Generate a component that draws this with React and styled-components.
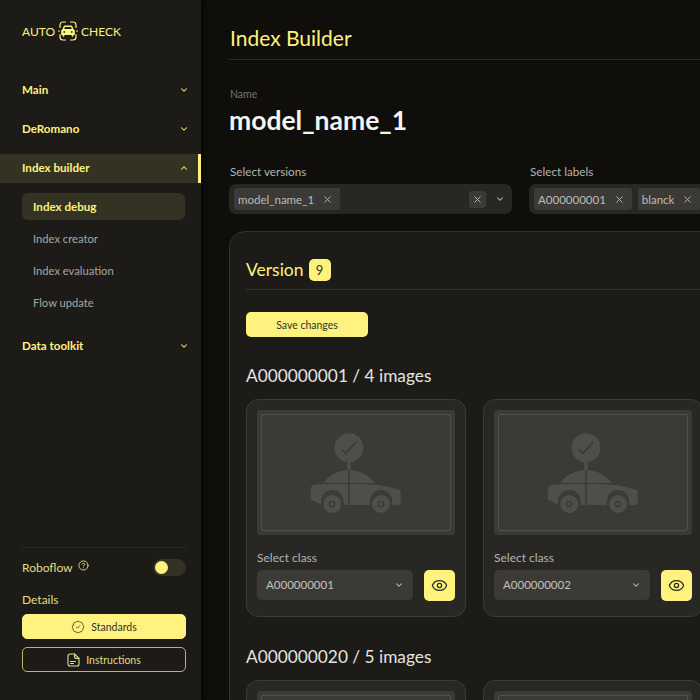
import React from 'react';
import styled, { createGlobalStyle } from 'styled-components';
import { ChevronDown, ChevronUp, X, Eye, BadgeCheck, CircleHelp } from 'lucide-react';

const GlobalStyle = createGlobalStyle`
  html, body { margin: 0; padding: 0; background: #0f0e0b; }
  body { font-family: Lato, "Noto Sans", sans-serif; overflow: hidden; }
  * { box-sizing: border-box; }
`;

const Page = styled.div`
  display: flex;
  width: 700px;
  height: 700px;
  overflow: hidden;
`;

const Sidebar = styled.aside`
  flex: 0 0 201px;
  height: 700px;
  background: #1c1b17;
  display: flex;
  flex-direction: column;
`;

const Brand = styled.div`
  display: flex;
  align-items: center;
  gap: 3px;
  height: 20px;
  margin: 21px 0 35px 22px;
  color: #fff27e;
  font-size: 12px;
`;

const Nav = styled.nav`
  display: flex;
  flex-direction: column;
  gap: 10px;
`;

const NavHead = styled.div`
  height: 29px;
  display: flex;
  align-items: center;
  justify-content: space-between;
  padding: 0 9px 2px 22px;
  color: #fff27e;
  font-size: 11.6px;
  font-weight: 700;
  background: ${p => (p.$open ? '#343222' : 'transparent')};
  border-right: 3px solid ${p => (p.$open ? '#fff27e' : 'transparent')};
`;

const SubList = styled.div`
  display: flex;
  flex-direction: column;
  gap: 5px;
  margin: 0 16px 6px 22px;
`;

const SubItem = styled.div`
  height: 27px;
  display: flex;
  align-items: center;
  padding: 0 0 1px 11px;
  border-radius: 6px;
  font-size: ${p => (p.$active ? '11.6px' : '11.2px')};
  font-weight: ${p => (p.$active ? 700 : 400)};
  color: ${p => (p.$active ? '#fff27e' : '#a8a7a2')};
  background: ${p => (p.$active ? '#343222' : 'transparent')};
`;

const SideFooter = styled.div`
  margin: auto 15px 20px 22px;
  border-top: 1px solid #2c2b27;
  display: flex;
  flex-direction: column;
`;

const RoboRow = styled.div`
  display: flex;
  align-items: center;
  height: 17px;
  margin-top: 11px;
  color: #e6dc84;
  font-size: 12px;
`;

const Help = styled(CircleHelp)`
  margin: -4px 0 0 5px;
`;

const Toggle = styled.div`
  margin-left: auto;
  width: 33px;
  height: 17px;
  border-radius: 9px;
  background: #343222;
  padding: 2px;
  display: flex;
  align-items: center;
`;

const Knob = styled.div`
  width: 13px;
  height: 13px;
  border-radius: 50%;
  background: #fff27e;
`;

const DetailsLabel = styled.div`
  margin: 15px 0 6px;
  color: #e6dc84;
  font-size: 12px;
  line-height: 17px;
`;

const SideButton = styled.div`
  height: 25px;
  margin-bottom: 8px;
  border-radius: 5px;
  display: flex;
  align-items: center;
  justify-content: center;
  gap: 6px;
  font-size: 10.5px;
  color: ${p => (p.$solid ? '#34332a' : '#e6dc84')};
  background: ${p => (p.$solid ? '#fff27e' : 'transparent')};
  border: 1px solid ${p => (p.$solid ? '#fff27e' : '#bdb464')};
`;

const Main = styled.main`
  flex: 1;
  min-width: 0;
  padding-left: 28px;
  background: #0f0e0b;
  box-shadow: inset 8px 0 8px -8px #000;
`;

const Title = styled.h1`
  margin: 0;
  height: 60px;
  padding: 24px 0 0 1px;
  border-bottom: 1px solid #2a2925;
  color: #fff27e;
  font-size: 21px;
  line-height: 28px;
  font-weight: 400;
`;

const NameLabel = styled.div`
  margin-top: 27px;
  padding-left: 1px;
  font-size: 10.5px;
  line-height: 14px;
  color: #75746f;
`;

const ModelName = styled.div`
  margin-top: 3px;
  font-size: 26.5px;
  line-height: 32px;
  font-weight: 700;
  color: #f4f4f2;
`;

const Filters = styled.div`
  display: flex;
  gap: 17px;
  margin-top: 28px;
`;

const Filter = styled.div`
  flex: 0 0 283px;
`;

const FilterLabel = styled.div`
  padding-left: 1px;
  font-size: 11.7px;
  line-height: 15px;
  color: #b5b4af;
  margin-bottom: 5px;
`;

const MultiSelect = styled.div`
  height: 30px;
  padding: 0 7px 0 5px;
  border-radius: 7px;
  background: #282724;
  display: flex;
  align-items: center;
  gap: 6px;
  color: #bdbcb7;
`;

const Chip = styled.div`
  height: 22px;
  border-radius: 3px;
  background: #3b3a37;
  padding: 0 7px 0 4px;
  display: flex;
  align-items: center;
  gap: 8px;
  font-size: 11.5px;
  white-space: nowrap;
  color: #bdbcb7;
`;

const ClearBox = styled.div`
  margin-left: auto;
  width: 17px;
  height: 17px;
  border-radius: 3px;
  background: #3b3a37;
  display: flex;
  align-items: center;
  justify-content: center;
  margin-right: 3px;
`;

const Panel = styled.section`
  width: 600px;
  margin-top: 17px;
  padding: 22px 16px 0;
  border: 1px solid #33322e;
  border-radius: 16px 0 0 0;
  background: #1c1b17;
`;

const VersionRow = styled.div`
  display: flex;
  align-items: center;
  gap: 5px;
  height: 31px;
  padding-bottom: 4px;
  box-sizing: content-box;
  border-bottom: 1px solid #33322e;
`;

const VersionTitle = styled.div`
  font-size: 17.5px;
  color: #fff27e;
`;

const Badge = styled.div`
  width: 22px;
  height: 22px;
  border-radius: 5px;
  background: #fff27e;
  color: #34332a;
  font-size: 13px;
  display: flex;
  align-items: center;
  justify-content: center;
`;

const SaveButton = styled.div`
  width: 122px;
  height: 25px;
  margin-top: 22px;
  border-radius: 5px;
  background: #fff27e;
  color: #34332a;
  font-size: 10.5px;
  display: flex;
  align-items: center;
  justify-content: center;
`;

const GroupTitle = styled.h2`
  margin: 0;
  padding-top: ${p => (p.$first ? '27px' : '28px')};
  font-size: 17.3px;
  line-height: 24px;
  font-weight: 400;
  color: #e4e4e1;
`;

const Cards = styled.div`
  display: flex;
  gap: 17px;
  margin-top: 11px;
`;

const Card = styled.div`
  flex: 0 0 220px;
  height: 218px;
  padding: 10px 10px 0;
  border: 1px solid #3a3935;
  border-radius: 12px;
  background: #282724;
`;

const Tile = styled.div`
  height: 125px;
  padding: 4px;
  border-radius: 4px;
  background: #3b3a37;
`;

const TileInner = styled.div`
  height: 100%;
  border: 1.5px solid #52514e;
  border-radius: 2px;
  display: flex;
  align-items: center;
  justify-content: center;
`;

const ClassLabel = styled.div`
  margin-top: 15px;
  font-size: 12px;
  line-height: 15px;
  color: #b5b4af;
`;

const ClassRow = styled.div`
  display: flex;
  justify-content: space-between;
  margin-top: 5px;
`;

const ClassSelect = styled.div`
  flex: 0 0 156px;
  height: 30px;
  padding: 0 9px 1px;
  border-radius: 5px;
  background: #3b3a37;
  display: flex;
  align-items: center;
  justify-content: space-between;
  font-size: 11.5px;
  color: #c3c2bd;
`;

const EyeButton = styled.div`
  width: 31px;
  height: 31px;
  border-radius: 5px;
  background: #fff27e;
  color: #2a2920;
  display: flex;
  align-items: center;
  justify-content: center;
`;

const Logo = () => (
  <svg width="20" height="20" viewBox="0 0 20 20" fill="none" stroke="#fff27e" strokeWidth="1.2" strokeLinecap="round">
    <path d="M2 6.500V4a3 3 0 0 1 3-3h2.500M12.500 1H15a3 3 0 0 1 3 3v2.500M2 13.500V16a3 3 0 0 0 3 3h2.500M12.500 19H15a3 3 0 0 0 3-3v-2.500" />
    <path d="M0 10h1.500M18.500 10H20" />
    <path d="M5.200 9l.9-3a1 1 0 0 1 1-.700h5.800a1 1 0 0 1 1 .700l.9 3" strokeWidth="1.400" />
    <path d="M5 8.700h10a1.200 1.200 0 0 1 1.200 1.200v3.600H3.800V9.900A1.200 1.200 0 0 1 5 8.700z" fill="#fff27e" />
    <path d="M5.500 13.500v1.300M14.500 13.500v1.300" strokeWidth="1.700" />
    <path d="M6 11h.6M13.400 11h.6" stroke="#1c1b17" strokeWidth="1.400" />
  </svg>
);

const FileIcon = () => (
  <svg width="13" height="14" viewBox="0 0 13 14" fill="none" stroke="#e6dc84" strokeWidth="1.100" strokeLinejoin="round" strokeLinecap="round">
    <path d="M3 1h4.500L12 5.500V11a2 2 0 0 1-2 2H3a2 2 0 0 1-2-2V3a2 2 0 0 1 2-2z" />
    <path d="M7.500 1v2.500a2 2 0 0 0 2 2H12" />
    <path d="M3.500 8.500h5M3.500 10.500h3" />
  </svg>
);

const tileBg = '#3b3a37';
const artFill = '#4f4e4a';

const CarPlaceholder = () => (
  <svg width="92" height="80" viewBox="0 0 92 80">
    <circle cx="39" cy="14.700" r="14.500" fill={artFill} />
    <path d="M31.700 16.300L36 20.300L46 9" fill="none" stroke={tileBg} strokeWidth="1.800" />
    <path d="M39 29v9" stroke={artFill} strokeWidth="3.500" strokeLinecap="round" />
    <path d="M13.300 50C19 42 29 37 39 37s20 5 26 13z" fill={artFill} />
    <path d="M.7 56c0-2 1-3.300 3-3.800 4-1 9-1.200 14-1.200h33c15 0 28 2 40 6.500v12c0 1.500-1 2.500-2.500 2.500H12L.7 66.500z" fill={artFill} />
    <path d="M39 37v37" stroke={tileBg} strokeWidth="1.600" />
    <path d="M10 50.600h60" stroke={tileBg} strokeWidth="1" />
    {[22.300, 71].map(cx => (
      <g key={cx}>
        <circle cx={cx} cy="71.300" r="11.500" fill={tileBg} />
        <circle cx={cx} cy="68" r="11" fill={tileBg} />
        <circle cx={cx} cy="71" r="9" fill={artFill} />
        <circle cx={cx} cy="71" r="2.700" fill="none" stroke={tileBg} strokeWidth="1.300" />
      </g>
    ))}
  </svg>
);

const ImageCard = ({ value }) => (
  <Card>
    <Tile>
      <TileInner>
        <CarPlaceholder />
      </TileInner>
    </Tile>
    {value && (
      <>
        <ClassLabel>Select class</ClassLabel>
        <ClassRow>
          <ClassSelect>
            {value}
            <ChevronDown size={10} strokeWidth={2.500} />
          </ClassSelect>
          <EyeButton>
            <Eye size={17} strokeWidth={1.800} />
          </EyeButton>
        </ClassRow>
      </>
    )}
  </Card>
);

export default function App() {
  return (
    <Page>
      <GlobalStyle />
      <Sidebar>
        <Brand>
          AUTO <Logo /> CHECK
        </Brand>
        <Nav>
          <NavHead>Main <ChevronDown size={10} strokeWidth={2.500} /></NavHead>
          <NavHead>DeRomano <ChevronDown size={10} strokeWidth={2.500} /></NavHead>
          <NavHead $open>Index builder <ChevronUp size={10} strokeWidth={2.500} /></NavHead>
          <SubList>
            <SubItem $active>Index debug</SubItem>
            <SubItem>Index creator</SubItem>
            <SubItem>Index evaluation</SubItem>
            <SubItem>Flow update</SubItem>
          </SubList>
          <NavHead>Data toolkit <ChevronDown size={10} strokeWidth={2.500} /></NavHead>
        </Nav>
        <SideFooter>
          <RoboRow>
            Roboflow <Help size={11} />
            <Toggle><Knob /></Toggle>
          </RoboRow>
          <DetailsLabel>Details</DetailsLabel>
          <SideButton $solid><BadgeCheck size={14} strokeWidth={1.300} /> Standards</SideButton>
          <SideButton><FileIcon /> Instructions</SideButton>
        </SideFooter>
      </Sidebar>
      <Main>
        <Title>Index Builder</Title>
        <NameLabel>Name</NameLabel>
        <ModelName>model_name_1</ModelName>
        <Filters>
          <Filter>
            <FilterLabel>Select versions</FilterLabel>
            <MultiSelect>
              <Chip>model_name_1 <X size={11} /></Chip>
              <ClearBox><X size={11} /></ClearBox>
              <ChevronDown size={10} strokeWidth={2.500} />
            </MultiSelect>
          </Filter>
          <Filter>
            <FilterLabel>Select labels</FilterLabel>
            <MultiSelect>
              <Chip>A000000001 <X size={11} /></Chip>
              <Chip>blanck <X size={11} /></Chip>
            </MultiSelect>
          </Filter>
        </Filters>
        <Panel>
          <VersionRow>
            <VersionTitle>Version</VersionTitle>
            <Badge>9</Badge>
          </VersionRow>
          <SaveButton>Save changes</SaveButton>
          <GroupTitle $first>A000000001 / 4 images</GroupTitle>
          <Cards>
            <ImageCard value="A000000001" />
            <ImageCard value="A000000002" />
          </Cards>
          <GroupTitle>A000000020 / 5 images</GroupTitle>
          <Cards>
            <ImageCard />
            <ImageCard />
          </Cards>
        </Panel>
      </Main>
    </Page>
  );
}
